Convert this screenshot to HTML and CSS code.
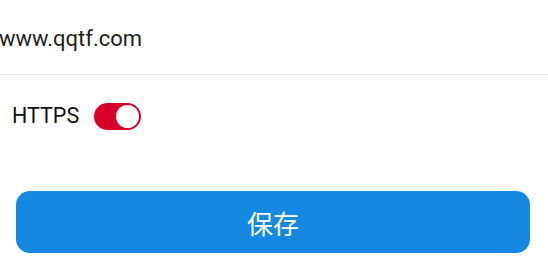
FILE: index.html
```html
<!DOCTYPE html>
<html lang="zh-CN">
<head>
<meta charset="utf-8">
<link rel="stylesheet" href="styles.css">
</head>
<body>
<div class="page">
  <div class="url-row">
    <span class="url-text">www.qqtf.com</span>
  </div>
  <div class="https-row">
    <span class="https-label">HTTPS</span>
    <span class="toggle"><span class="knob"></span></span>
  </div>
  <div class="actions">
    <button class="save-btn">保存</button>
  </div>
</div>
</body>
</html>
```

FILE: styles.css
```css
html, body {
  margin: 0;
  padding: 0;
  background: #ffffff;
}
.page {
  width: 548px;
  height: 257px;
  font-family: Roboto, "Noto Sans CJK SC", sans-serif;
  color: #1a1a1a;
  overflow: hidden;
}
.url-row {
  height: 74px;
  border-bottom: 1px solid #ebebeb;
  display: flex;
  align-items: center;
  padding-left: 0;
}
.url-text {
  font-size: 22px;
  color: #222222;
  margin-left: -1px;
  margin-top: 2px;
}
.https-row {
  height: 80px;
  display: flex;
  align-items: center;
  padding-left: 12px;
  gap: 15px;
}
.https-label {
  font-size: 21.5px;
  color: #111111;
  margin-top: 1px;
}
.toggle {
  width: 47px;
  height: 27px;
  border-radius: 14px;
  background: #d8002b;
  display: flex;
  justify-content: flex-end;
  align-items: center;
  box-sizing: border-box;
  padding: 2px;
  margin-top: 2px;
}
.knob {
  width: 23px;
  height: 23px;
  border-radius: 50%;
  background: #ffffff;
}
.actions {
  padding: 36px 18px 0 16px;
}
.save-btn {
  display: block;
  width: 100%;
  height: 62px;
  border: none;
  border-radius: 14px;
  background: #1589e1;
  color: #ffffff;
  font-family: "Noto Sans CJK SC", sans-serif;
  font-size: 26px;
  padding: 0;
}
```
